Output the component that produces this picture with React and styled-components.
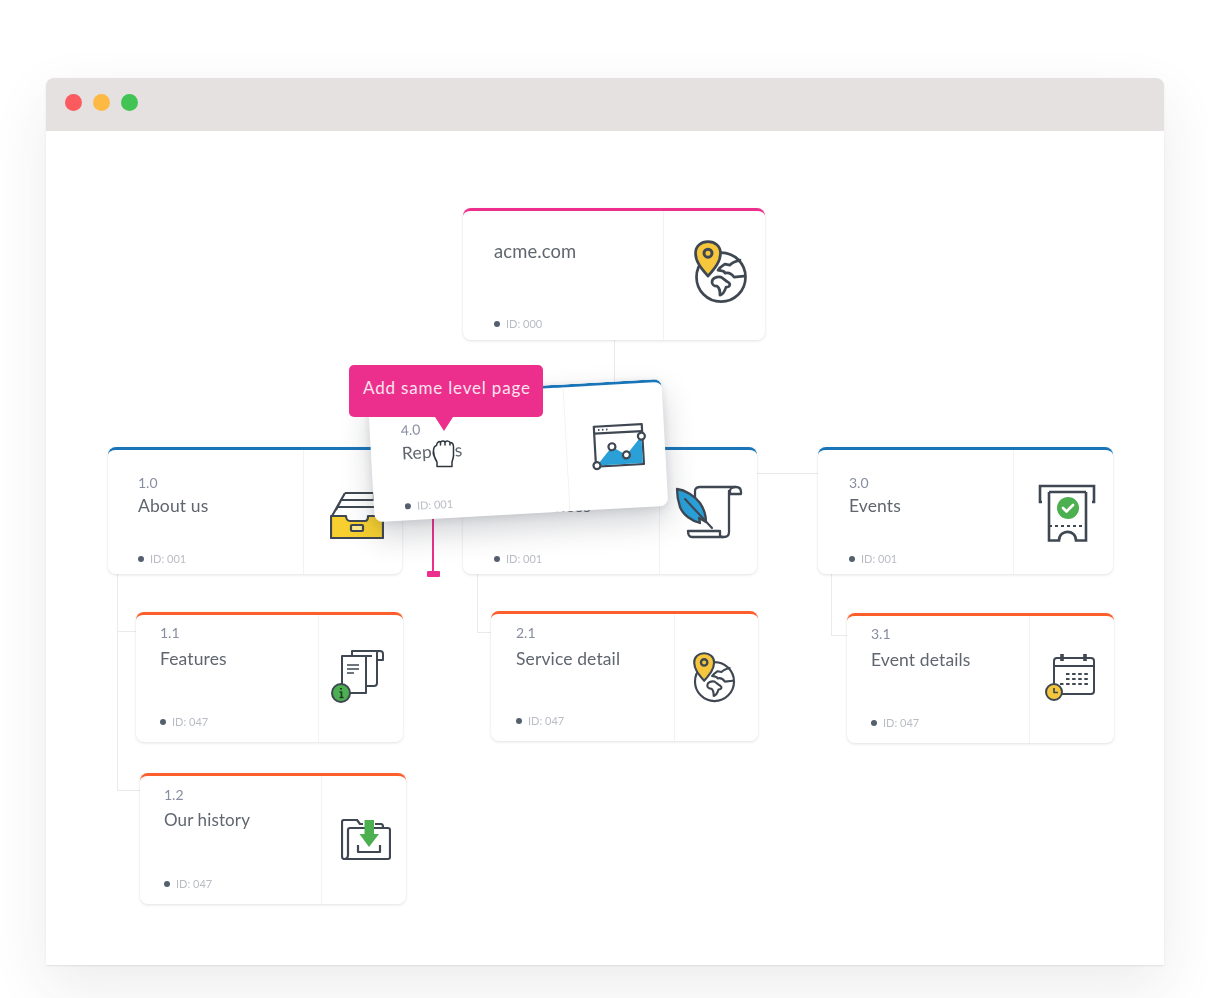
import React from 'react';
import styled, { createGlobalStyle } from 'styled-components';

const INK = '#3f4852';
const YELLOW = '#f6c63c';
const BLUE = '#2a9fd8';
const GREEN = '#4caf50';

const GlobalStyle = createGlobalStyle`
  html, body {
    margin: 0;
    background: #fff;
    font-family: Lato, "Open Sans", sans-serif;
  }
`;

function GlobeIcon({ size = 54 }) {
  return (
    <svg width={size} height={size * 1.19} viewBox="0 0 54 64" fill="none" stroke={INK} strokeWidth="2.7" strokeLinejoin="round" strokeLinecap="round">
      <circle cx="27" cy="37" r="24.5" />
      <path d="M46 20C42 21 38 22 36 25L31 24C28 26 26 27 24 30C27 31 30 30 31 33C35 32 38 34 40 37L50 36" />
      <path d="M18 42C18 38 23 36 27 37C30 39 32 41 34 42C37 44 36 47 32 47C31 50 30 54 26 55C26 51 26 48 23 46C20 46 18 44 18 42Z" />
      <path d="M14 36C8 29 1.5 22 1.5 13C1.5 6 7 1.5 14 1.5C21 1.5 26.5 6 26.5 13C26.5 22 20 29 14 36Z" fill={YELLOW} />
      <circle cx="14" cy="13" r="4" strokeWidth="3" />
    </svg>
  );
}

function DrawerIcon() {
  return (
    <svg width="54" height="48" viewBox="0 0 54 48" fill="none" stroke={INK} strokeWidth="2.2" strokeLinejoin="round">
      <path d="M15 2H44V9" />
      <path d="M11 9H47V16" />
      <path d="M8 16H49V24" />
      <path d="M15 2L2 25M11 9L6 19" />
      <path d="M1 25H16C16 28 18 30 20 30H35C37 30 38 28 38 25H53V47H1Z" fill="#f7d02f" />
      <rect x="21" y="34" width="12" height="6" rx="1" fill="#fbe88f" />
    </svg>
  );
}

function QuillIcon() {
  return (
    <svg width="68" height="54" viewBox="0 0 68 54" fill="none" stroke={INK} strokeWidth="2.3" strokeLinejoin="round" strokeLinecap="round">
      <path d="M20 14V6C20 3 22 2 25 2H61C64 2 66 4 66 7V9H55" />
      <path d="M55 9V6C55 4 57 2 60 2" />
      <path d="M54 6V47C54 50 52 52 49 52H17C14 52 13 50 13 46H44" />
      <path d="M45 46V50C45 51 46 52 48 52" />
      <path d="M2 4C10 5 20 11 25 18C29 24 31 30 31 37L24 33L25 38C17 36 8 30 5 22C2.5 15 2 9 2 4Z" fill={BLUE} />
      <path d="M10 14L37 43" strokeWidth="2.1" />
    </svg>
  );
}

function TicketIcon() {
  return (
    <svg width="58" height="58" viewBox="0 0 58 58" fill="none" stroke={INK} strokeWidth="2.6">
      <path d="M4 18H2V2H56V18H54" strokeLinejoin="miter" />
      <path d="M11 8V56.5H21C21 45 38 45 38 56.5H48V8" />
      <path d="M11 8H48" />
      <path d="M11 42H48" strokeDasharray="3 3" strokeWidth="1.9" />
      <circle cx="30" cy="24" r="11" fill={GREEN} stroke="none" />
      <path d="M25 24L28.5 27.5L35 21" stroke="#fff" strokeWidth="2.6" strokeLinecap="round" strokeLinejoin="round" />
    </svg>
  );
}

function DocsIcon() {
  return (
    <svg width="54" height="56" viewBox="0 0 54 56" fill="none" stroke={INK} strokeWidth="2" strokeLinejoin="round">
      <path d="M21 8V3H49C51 3 52 4 52 6V12H46" />
      <path d="M46 12V5M46 5C46 3 47 3 49 3" />
      <path d="M46 8V35C46 37 45 38 43 38H36" />
      <path d="M41 8H11V45H35V8" fill="#fff" />
      <path d="M16 17H28M16 21H28M16 25H23" strokeWidth="1.7" />
      <circle cx="10" cy="45" r="9" fill={GREEN} />
      <path d="M8.5 44H10.5V49.5M8.5 49.5H12.5" stroke="#20382a" strokeWidth="1.6" />
      <path d="M10 40V41.5" stroke="#20382a" strokeWidth="2" />
    </svg>
  );
}

function CalendarIcon() {
  return (
    <svg width="52" height="50" viewBox="0 0 52 50" fill="none" stroke={INK} strokeWidth="2" strokeLinejoin="round">
      <rect x="10" y="5" width="40" height="36" rx="3" />
      <path d="M10 13H50" />
      <path d="M18 1V8M41 1V8" strokeWidth="3.6" />
      <path d="M22 21H46M22 26H46M16 31H46" strokeDasharray="3.5 2.6" strokeWidth="1.8" />
      <circle cx="10" cy="39" r="8" fill={YELLOW} />
      <path d="M10 35V39.5H14" strokeWidth="1.7" />
    </svg>
  );
}

function FolderIcon() {
  return (
    <svg width="50" height="42" viewBox="0 0 50 42" fill="none" stroke={INK} strokeWidth="2.2" strokeLinejoin="round">
      <path d="M3 40C2 40 1 39 1 37V3C1 2 2 1 3 1H16L19 5H22" />
      <path d="M34 5H40C41 5 42 6 42 8V9" />
      <path d="M3 40C6 40 7 38 7 36V11C7 10 8 9 9 9H47C48 9 49 10 49 11V38C49 39 48 40 47 40Z" fill="#fff" />
      <path d="M23.5 1H33V15H38L28 28L18.5 15H23.5Z" fill={GREEN} stroke="none" />
      <path d="M17 26V33H39V26" />
    </svg>
  );
}

function ChartIcon() {
  return (
    <svg width="56" height="46" viewBox="0 0 56 46" fill="none" stroke={INK} strokeWidth="2.2" strokeLinejoin="round">
      <rect x="4" y="2" width="48" height="40" fill="#fff" />
      <path d="M4 9H52" />
      <path d="M8 5.5H9.5M12 5.5H13.5M16 5.5H17.5" strokeWidth="1.8" />
      <path d="M5 41L21 23L35 32L51 14V41Z" fill={BLUE} stroke="none" />
      <circle cx="5" cy="41" r="3.5" fill="#fff" />
      <circle cx="21" cy="23" r="3.5" fill="#fff" />
      <circle cx="35" cy="32" r="3.5" fill="#fff" />
      <circle cx="51" cy="14" r="3.5" fill="#fff" />
    </svg>
  );
}

function GrabHand() {
  return (
    <svg width="24" height="29" viewBox="0 0 24 29" fill="#fff" stroke="#2f363d" strokeWidth="1.5" strokeLinejoin="round" strokeLinecap="round">
      <path d="M5 27.5V23C3 20 1.5 17 1.5 12C1.5 9 2.5 7 4.5 6.5C5 3 7 2 8.5 3C10 1.5 12 1.5 13 3C15 1.5 17 2 18 3.5C20 3.5 21.5 5 21.5 8V16C21.5 19 20.5 21 20 23V27.5Z" />
      <path d="M8.5 3V6M13 3V6M18 3.5V6" />
    </svg>
  );
}

const TOP_COLORS = { pink: '#ec2f8c', blue: '#1a75b8', orange: '#fc5f2b' };

const nodes = [
  { x: 417, y: 77, w: 302, h: 132, side: 102, color: 'pink', pad: 31, top: 29, bottom: 9, size: 18.4, name: 'acme.com', id: '000', icon: <GlobeIcon />, left: 13, under: 6 },
  { x: 62, y: 316, w: 294, h: 127, side: 99, color: 'blue', pad: 30, top: 24, bottom: 8, gap: 3, num: '1.0', name: 'About us', id: '001', icon: <DrawerIcon />, left: 8, shift: 5 },
  { x: 417, y: 316, w: 294, h: 127, side: 98, color: 'blue', pad: 31, top: 24, bottom: 8, gap: 3, num: '2.0', name: 'Our services', id: '001', icon: <QuillIcon /> },
  { x: 772, y: 316, w: 295, h: 127, side: 100, color: 'blue', pad: 31, top: 24, bottom: 8, gap: 3, num: '3.0', name: 'Events', id: '001', icon: <TicketIcon />, left: 6, shift: 2 },
  { x: 90, y: 481, w: 267, h: 130, side: 85, color: 'orange', pad: 24, top: 9, bottom: 13, gap: 6, num: '1.1', name: 'Features', id: '047', icon: <DocsIcon />, right: 6, under: 6 },
  { x: 94, y: 642, w: 266, h: 131, side: 85, color: 'orange', pad: 24, top: 10, bottom: 13, gap: 5, size: 17, num: '1.2', name: 'Our history', id: '047', icon: <FolderIcon />, left: 3 },
  { x: 445, y: 480, w: 267, h: 130, side: 84, color: 'orange', pad: 25, top: 10, bottom: 13, gap: 6, num: '2.1', name: 'Service detail', id: '047', icon: <GlobeIcon size={43} />, right: 4 },
  { x: 801, y: 482, w: 267, h: 130, side: 85, color: 'orange', pad: 24, top: 9, bottom: 13, gap: 6, num: '3.1', name: 'Event details', id: '047', icon: <CalendarIcon />, right: 4, under: 3 },
];

const lines = [
  { x: 568, y: 209, w: 1, h: 107 },
  { x: 711, y: 342, w: 61, h: 1 },
  { x: 71, y: 443, w: 1, h: 216 },
  { x: 71, y: 500, w: 19, h: 1 },
  { x: 71, y: 659, w: 23, h: 1 },
  { x: 431, y: 443, w: 1, h: 58 },
  { x: 431, y: 501, w: 14, h: 1 },
  { x: 785, y: 443, w: 1, h: 61 },
  { x: 785, y: 504, w: 16, h: 1 },
];

function NodeBody({ node }) {
  return (
    <>
      <Info $pad={node.pad} $top={node.top} $bottom={node.bottom}>
        {node.num && <Num>{node.num}</Num>}
        <Name $gap={node.gap} $size={node.size}>{node.name}</Name>
        <PageId>
          <Dot />
          ID: {node.id}
        </PageId>
      </Info>
      <IconCell $w={node.side} $shift={node.shift} $left={node.left} $right={node.right} $under={node.under}>
        {node.icon}
      </IconCell>
    </>
  );
}

export default function App() {
  return (
    <Page>
      <GlobalStyle />
      <Window>
        <TitleBar>
          <Light $color="#fb5b5f" />
          <Light $color="#fdb943" />
          <Light $color="#41c453" />
        </TitleBar>
        <Canvas>
          {lines.map((l, i) => (
            <Line key={i} $x={l.x} $y={l.y} $w={l.w} $h={l.h} />
          ))}
          {nodes.map((n) => (
            <Card key={n.name} $x={n.x} $y={n.y} $w={n.w} $h={n.h} $color={n.color}>
              <NodeBody node={n} />
            </Card>
          ))}
          <DragLine />
          <DragHandle />
          <DraggedCard $x={325} $y={256} $w={294} $h={127} $color="blue">
            <NodeBody node={{ pad: 31, top: 25, bottom: 7, gap: 3, num: '4.0', name: 'Reports', id: '001', side: 99, left: 5, icon: <ChartIcon /> }} />
          </DraggedCard>
          <Tooltip>Add same level page</Tooltip>
          <Cursor>
            <GrabHand />
          </Cursor>
        </Canvas>
      </Window>
    </Page>
  );
}

const Page = styled.div`
  width: 1208px;
  height: 998px;
  box-sizing: border-box;
  padding: 78px 44px 33px 46px;
  overflow: hidden;
`;

const Window = styled.div`
  height: 100%;
  display: flex;
  flex-direction: column;
  border-radius: 8px 8px 0 0;
  background: #fff;
  box-shadow: 0 22px 60px rgba(40, 40, 50, 0.09), 0 1px 2px rgba(40, 40, 50, 0.1);
`;

const TitleBar = styled.div`
  flex: 0 0 53px;
  display: flex;
  align-items: center;
  gap: 11px;
  padding: 0 0 4px 19px;
  box-sizing: border-box;
  background: #e5e1e1;
  border-radius: 8px 8px 0 0;
`;

const Light = styled.span`
  width: 17px;
  height: 17px;
  border-radius: 50%;
  background: ${(p) => p.$color};
`;

const Canvas = styled.div`
  position: relative;
  flex: 1;
  filter: blur(0.45px);
`;

const Line = styled.div`
  position: absolute;
  left: ${(p) => p.$x}px;
  top: ${(p) => p.$y}px;
  width: ${(p) => p.$w}px;
  height: ${(p) => p.$h}px;
  background: #e9eaec;
`;

const Card = styled.div`
  position: absolute;
  left: ${(p) => p.$x}px;
  top: ${(p) => p.$y}px;
  width: ${(p) => p.$w}px;
  height: ${(p) => p.$h}px;
  box-sizing: border-box;
  display: flex;
  background: #fff;
  border-top: 3px solid ${(p) => TOP_COLORS[p.$color]};
  border-radius: 8px;
  box-shadow: 0 1px 3px rgba(50, 55, 70, 0.15);
`;

const DraggedCard = styled(Card)`
  transform: rotate(-3.2deg);
  box-shadow: 0 14px 30px rgba(50, 55, 70, 0.22), 0 2px 8px rgba(50, 55, 70, 0.12);
`;

const Info = styled.div`
  flex: 1;
  min-width: 0;
  display: flex;
  flex-direction: column;
  padding: ${(p) => p.$top}px 0 ${(p) => p.$bottom}px ${(p) => p.$pad}px;
`;

const Num = styled.div`
  font-size: 14px;
  line-height: 18px;
  color: #888ea0;
`;

const Name = styled.div`
  margin-top: ${(p) => p.$gap || 0}px;
  font-size: ${(p) => p.$size || 17.5}px;
  letter-spacing: 0.12px;
  line-height: 22px;
  color: #5f666f;
`;

const PageId = styled.div`
  margin-top: auto;
  display: flex;
  align-items: center;
  font-size: 11px;
  line-height: 14px;
  color: #b9bdc3;
`;

const Dot = styled.span`
  width: 6px;
  height: 6px;
  margin-right: 6px;
  border-radius: 50%;
  background: #55606e;
`;

const IconCell = styled.div`
  flex: 0 0 ${(p) => p.$w}px;
  display: flex;
  align-items: center;
  justify-content: center;
  box-sizing: border-box;
  padding: ${(p) => p.$shift || 0}px ${(p) => p.$right || 0}px ${(p) => p.$under || 0}px ${(p) => p.$left || 0}px;
  border-left: 1px solid #f1f2f3;
`;

const DragLine = styled.div`
  position: absolute;
  left: 386px;
  top: 380px;
  width: 2px;
  height: 62px;
  background: #ec2f8c;
`;

const DragHandle = styled.div`
  position: absolute;
  left: 381px;
  top: 440px;
  width: 13px;
  height: 6px;
  border-radius: 1px;
  background: #ec2f8c;
`;

const Tooltip = styled.div`
  position: absolute;
  left: 303px;
  top: 234px;
  width: 194px;
  height: 52px;
  box-sizing: border-box;
  padding: 0 0 7px 14px;
  display: flex;
  align-items: center;
  border-radius: 5px;
  background: #ec2f8c;
  color: #fbe3ef;
  font-size: 17px;
  letter-spacing: 0.82px;

  &::after {
    content: '';
    position: absolute;
    left: 86px;
    top: 52px;
    border-left: 9px solid transparent;
    border-right: 9px solid transparent;
    border-top: 14px solid #ec2f8c;
  }
`;

const Cursor = styled.div`
  position: absolute;
  left: 386px;
  top: 308px;
  line-height: 0;
`;
